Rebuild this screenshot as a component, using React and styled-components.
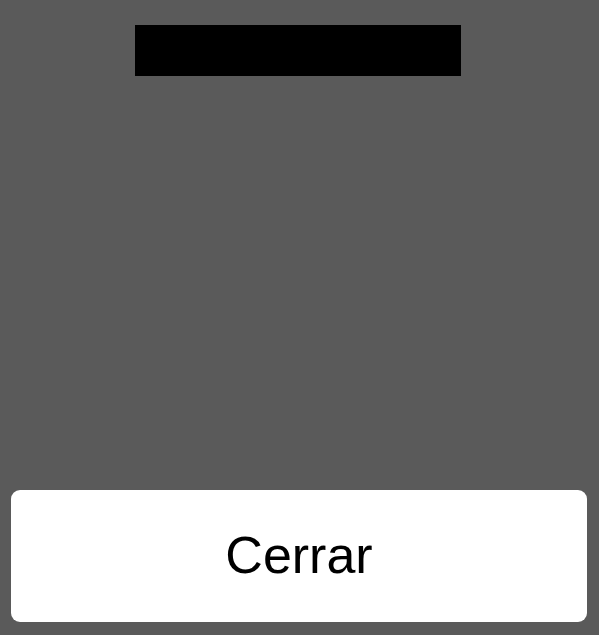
import React from "react";
import styled, { createGlobalStyle } from "styled-components";

const GlobalStyle = createGlobalStyle`
  html, body {
    margin: 0;
    padding: 0;
    background: #5a5a5a;
  }
  * {
    box-sizing: border-box;
  }
`;

const Screen = styled.div`
  height: 635px;
  display: flex;
  flex-direction: column;
  align-items: center;
  padding: 25px 12px 13px 11px;
  background: #5a5a5a;
`;

const Bar = styled.div`
  width: 326px;
  height: 51px;
  background: #000000;
  margin-right: 2px;
`;

const Spacer = styled.div`
  flex: 1;
`;

const CloseButton = styled.button`
  width: 100%;
  height: 132px;
  border: none;
  border-radius: 9px;
  background: #ffffff;
  color: #000000;
  font-family: "Liberation Sans", Arial, sans-serif;
  font-size: 52px;
  padding: 0 0 2px 0;
  cursor: pointer;
`;

const App = () => {
  return (
    <>
      <GlobalStyle />
      <Screen>
        <Bar />
        <Spacer />
        <CloseButton>Cerrar</CloseButton>
      </Screen>
    </>
  );
};

export default App;
